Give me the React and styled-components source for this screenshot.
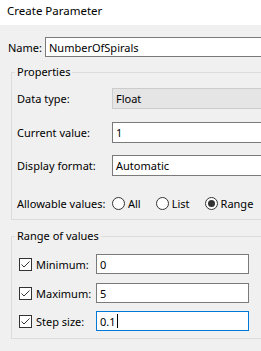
import React from 'react';
import styled, { createGlobalStyle } from 'styled-components';

const GlobalStyle = createGlobalStyle`
  body {
    margin: 0;
    background: #f0f0f0;
    overflow: hidden;
    font-family: "Noto Sans", "Open Sans", sans-serif;
    font-size: 11px;
    color: #000;
  }
`

const Dialog = styled.div`
  width: 300px;
  height: 351px;
  background: #f0f0f0;
`

const TitleBar = styled.div`
  height: 25px;
  background: #fff;
  padding-left: 7px;
  line-height: 22px;
  font-size: 11.5px;
`

const Body = styled.div`
  padding: 12px 0 0 8px;
`

const Row = styled.div`
  display: flex;
  align-items: center;
  height: ${p => p.$h || 21}px;
  margin-bottom: ${p => p.$gap || 0}px;
`

const Label = styled.span`
  width: ${p => p.$w}px;
  flex: none;
  white-space: nowrap;
`

const Field = styled.div`
  box-sizing: border-box;
  height: ${p => p.$h || 21}px;
  width: ${p => p.$w ? `${p.$w}px` : 'auto'};
  flex: ${p => p.$w ? 'none' : 1};
  border: 1px solid ${p => p.$focus ? '#0078d7' : p.$disabled ? '#cccccc' : '#7a7a7a'};
  background: ${p => p.$disabled ? '#e5e5e5' : '#fff'};
  padding-left: 3px;
  display: flex;
  align-items: center;
  white-space: nowrap;
`

const Caret = styled.span`
  display: inline-block;
  width: 1px;
  height: 14px;
  background: #000;
  margin-left: 1px;
`

const Group = styled.fieldset`
  margin: ${p => p.$top}px 0 0 3px;
  padding: ${p => p.$pad};
  border: 1px solid #dcdcdc;
  border-right: none;
  min-width: 0;
`

const Legend = styled.legend`
  padding: 0 2px;
  line-height: 14px;
  margin-left: ${p => p.$shift || 0}px;
`

const Inner = styled.div`
  padding-left: 2px;
`

const Radios = styled.div`
  display: flex;
  align-items: center;
  gap: 15px;
`

const RadioItem = styled.label`
  display: flex;
  align-items: center;
  gap: 3px;
`

const Circle = styled.span`
  box-sizing: border-box;
  width: 13px;
  height: 13px;
  border-radius: 50%;
  border: 1px solid #333;
  background: #fff;
  display: flex;
  align-items: center;
  justify-content: center;
  &::after {
    content: '';
    display: ${p => p.$on ? 'block' : 'none'};
    width: 7px;
    height: 7px;
    border-radius: 50%;
    background: #333;
  }
`

const Check = styled.span`
  box-sizing: border-box;
  width: 13px;
  height: 13px;
  border: 1px solid #333;
  background: #fff;
  flex: none;
  margin-right: 4px;
  display: flex;
`

const Radio = ({ label, on }) => (
  <RadioItem>
    <Circle $on={on} />
    {label}
  </RadioItem>
)

const CheckRow = ({ label, value, focus, gap }) => (
  <Row $h={20} $gap={gap}>
    <Check>
      <svg width="11" height="11" viewBox="0 0 11 11">
        <path d="M1.5 5.5 L4 8 L9.5 2.5" fill="none" stroke="#333" strokeWidth="1" />
      </svg>
    </Check>
    <Label $w={60}>{label}</Label>
    <Field $h={20} $w={153} $focus={focus}>
      {value}
      {focus && <Caret />}
    </Field>
  </Row>
)

export default function App() {
  return (
    <Dialog>
      <GlobalStyle />
      <TitleBar>Create Parameter</TitleBar>
      <Body>
        <Row $h={20}>
          <Label $w={37}>Name:</Label>
          <Field $h={20}>NumberOfSpirals</Field>
        </Row>

        <Group $top={8} $pad="9px 0 9px 3px">
          <Legend>Properties</Legend>
          <Inner>
            <Row $gap={13}>
              <Label $w={95}>Data type:</Label>
              <Field $disabled>Float</Field>
            </Row>
            <Row $gap={12}>
              <Label $w={95}>Current value:</Label>
              <Field>1</Field>
            </Row>
            <Row $gap={20}>
              <Label $w={95}>Display format:</Label>
              <Field>Automatic</Field>
            </Row>
            <Row $h={14}>
              <Label $w={95}>Allowable values:</Label>
              <Radios>
                <Radio label="All" />
                <Radio label="List" />
                <Radio label="Range" on />
              </Radios>
            </Row>
          </Inner>
        </Group>

        <Group $top={9} $pad="11px 0 7px 7px">
          <Legend $shift={-4}>Range of values</Legend>
          <CheckRow label="Minimum:" value="0" gap={9} />
          <CheckRow label="Maximum:" value="5" gap={8} />
          <CheckRow label="Step size:" value="0.1" focus />
        </Group>
      </Body>
    </Dialog>
  );
}
